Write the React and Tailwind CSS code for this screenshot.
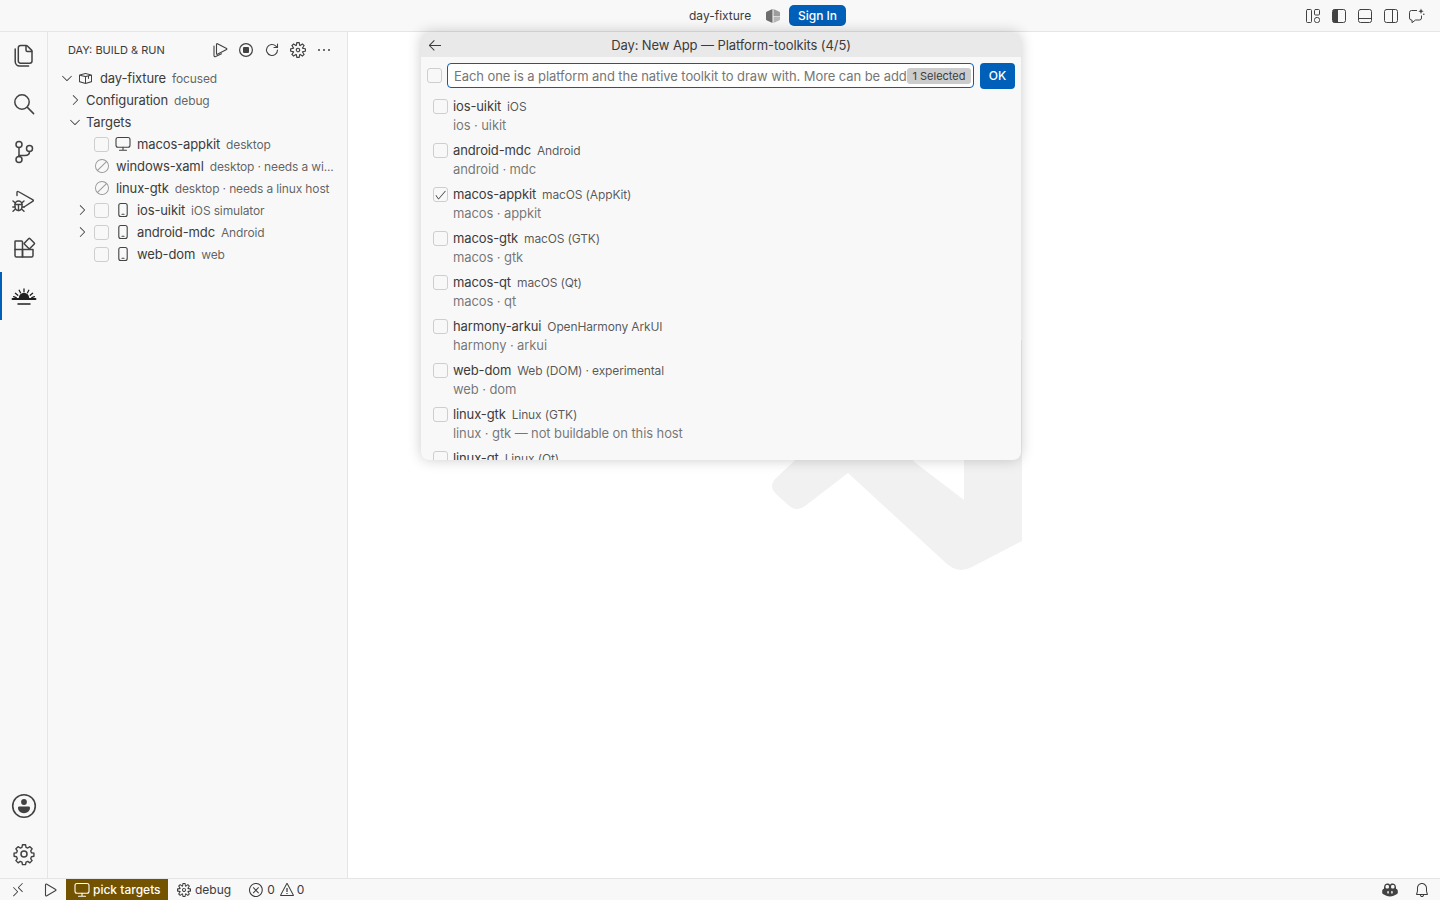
import React from "react";
import {
  VscCircleSlash, VscChevronRight, VscChevronDown, VscEllipsis,
  VscArrowLeft, VscCheck, VscSettingsGear, VscPackage, VscRemote, VscError, VscWarning, VscBell,
} from "react-icons/vsc";

const S = ({ size = 24, sw = 1.5, className = "", children, vb = "0 0 24 24" }) => (
  <svg width={size} height={size} viewBox={vb} fill="none" stroke="currentColor" strokeWidth={sw} strokeLinecap="round" strokeLinejoin="round" className={className}>
    {children}
  </svg>
);

const Files = () => (
  <S><path d="M8.500 1.500h5.800c.4 0 .8.2 1.100.5l4.100 4.100c.3.3.5.7.5 1.100V17a2.200 2.200 0 0 1-2.200 2.200H8.500A2.200 2.200 0 0 1 6.300 17V3.700a2.200 2.200 0 0 1 2.200-2.200z" /><path d="M14 1.800V6a1.500 1.500 0 0 0 1.500 1.500h4.200" /><path d="M3.200 5v12.600a4.400 4.400 0 0 0 4.400 4.400h9" /></S>
);
const Search = () => (
  <S><circle cx="10" cy="10" r="7.200" /><path d="M15.400 15.400 21.600 21.600" /></S>
);
const Source = () => (
  <S><circle cx="7" cy="4.500" r="3" /><circle cx="7" cy="19.500" r="3" /><circle cx="17.500" cy="8.500" r="3" /><path d="M7 7.500v9" /><path d="M7 15.500h6c2.500 0 4.500-1.500 4.500-4" /></S>
);
const DebugAlt = () => (
  <S sw={1.400}><path d="M5 7.500V4.200c0-.6.700-1 1.200-.7L21 11.800c.5.300.5 1 0 1.300L12 19" /><path d="M3 16.500a3.500 3.500 0 0 1 7 0v2.500a3.500 3.500 0 0 1-7 0z" /><path d="M3 16.500H10M6.500 16.500v6M1 13l2.300 2M12 13l-2.300 2M.8 19h2.200M12.200 19H10M1 23.200l2.500-2.200M12 23.200 9.500 21" /></S>
);
const Extensions = () => (
  <S><path d="M3.500 5h6c.6 0 1 .4 1 1v15H4.500a1.500 1.500 0 0 1-1.500-1.500V5.500c0-.3.200-.5.500-.5z" /><path d="M3 13.500h18M10.500 13.500V21h9a1.500 1.500 0 0 0 1.500-1.500V13.500" /><path d="M12.300 7.200 16.800 2.500c.3-.3.700-.3 1 0l4.500 4.500c.3.300.3.700 0 1l-4.500 4.500c-.3.300-.7.300-1 0l-4.500-4.500c-.3-.3-.3-.6 0-.8z" /></S>
);
const DayLogo = () => (
  <svg width="26" height="26" viewBox="0 0 26 26" fill="#1f1f1f" stroke="#1f1f1f" strokeLinecap="round">
    <path d="M7.800 14a5.200 5.200 0 0 1 10.400 0z" stroke="none" />
    <path strokeWidth="1.300" d="M13 5v2.800M8.200 6.300l1.300 2.500M17.800 6.300l-1.300 2.500M4.400 9.300l2.400 1.900M21.600 9.300l-2.400 1.900M2.600 12.700l2.600 1M23.400 12.700l-2.600 1" />
    <path strokeWidth="1.800" d="M1.500 15h23" />
    <path strokeWidth="1.500" d="M7 20h12" />
  </svg>
);
const Account = () => (
  <svg width="26" height="26" viewBox="0 0 26 26" fill="none">
    <circle cx="13" cy="13" r="11.300" stroke="#424242" strokeWidth="1.600" />
    <circle cx="13" cy="9" r="2.900" fill="#424242" />
    <path d="M7 14.800c0-.8.700-1.300 1.400-1.300h9.200c.7 0 1.400.5 1.400 1.300 0 3.200-2.700 5.400-6 5.400s-6-2.200-6-5.400z" fill="#424242" />
  </svg>
);
const Gear = ({ size = 24, sw = 1.5 }) => (
  <S size={size} sw={sw}><circle cx="12" cy="12" r="3" /><path d="M10.300 2.500h3.400l.5 2.700 1.900.8 2.300-1.500 2.400 2.400-1.500 2.300.8 1.900 2.700.5v3.400l-2.700.5-.8 1.900 1.500 2.300-2.400 2.400-2.300-1.500-1.900.8-.5 2.700h-3.400l-.5-2.700-1.900-.8-2.300 1.500-2.400-2.400 1.500-2.300-.8-1.900-2.700-.5v-3.400l2.700-.5.800-1.900-1.500-2.300 2.400-2.400 2.300 1.500 1.900-.8z" transform="translate(12 12) scale(.92) translate(-12 -12.500)" /></S>
);
const Play = ({ size = 16 }) => (
  <S size={size} sw={1.100} vb="0 0 16 16"><path d="M3.500 2.700v10.600c0 .5.500.8.900.6l9.300-5.300c.4-.2.400-.9 0-1.100L4.400 2.100c-.4-.2-.9.100-.9.600z" /></S>
);
const PlayDouble = () => (
  <S size={16} sw={1.100} vb="0 0 16 16"><path d="M4.500 2.200v9.600c0 .5.500.7.900.5l9.200-4.800c.4-.2.400-.8 0-1L5.400 1.700c-.4-.2-.9 0-.9.500z" /><path d="M2 4v9.500c0 1 .8 1.500 1.700 1.100L9.500 11.800" /></S>
);
const Stop = () => (
  <svg width="16" height="16" viewBox="0 0 16 16" fill="none"><circle cx="8" cy="8" r="6.400" stroke="#424242" strokeWidth="1.200" /><rect x="5" y="5" width="6" height="6" rx="1" fill="#424242" /></svg>
);
const Refresh = () => (
  <S size={16} sw={1.100} vb="0 0 16 16"><path d="M13.500 8a5.500 5.500 0 1 1-1.600-3.900L13.500 5.500" /><path d="M13.500 2v3.500H10" /></S>
);
const Phone = () => (
  <S size={16} sw={1.100} vb="0 0 16 16"><rect x="3.800" y="1.500" width="8.400" height="13" rx="2" /><path d="M7 12.300h2" /></S>
);
const Monitor = () => (
  <S size={16} sw={1.100} vb="0 0 16 16"><rect x="1" y="1.500" width="14" height="9.800" rx="2" /><path d="M8 11.300v2.700M4.500 14.200h7" /></S>
);
const LayoutCustom = () => (
  <S size={16} sw={1} vb="0 0 16 16"><rect x="1.500" y="1.500" width="5" height="13" rx="1" /><rect x="9.500" y="1.500" width="5" height="5.500" rx="1" /><rect x="9.500" y="9.500" width="5" height="5" rx="2" /></S>
);
const SideLeft = () => (
  <svg width="16" height="16" viewBox="0 0 16 16" fill="none"><rect x="1.500" y="1.500" width="13" height="13" rx="2" stroke="#424242" /><path d="M2 2.500c0-.5.500-1 1-1h4v13H3c-.5 0-1-.5-1-1z" fill="#424242" /></svg>
);
const PanelB = () => (
  <S size={16} sw={1} vb="0 0 16 16"><rect x="1.500" y="1.500" width="13" height="13" rx="2" /><path d="M1.500 10.500h13" /></S>
);
const SideRight = () => (
  <S size={16} sw={1} vb="0 0 16 16"><rect x="1.500" y="1.500" width="13" height="13" rx="2" /><path d="M9.500 1.500v13" /></S>
);
const Chat = () => (
  <svg width="18" height="16" viewBox="0 0 18 16" fill="none" stroke="#424242"><path d="M9 2.500H3.500a2 2 0 0 0-2 2v5.500a2 2 0 0 0 2 2H4v2.700L7.500 12h4a2 2 0 0 0 2-2V7.500" strokeLinejoin="round" /><path d="M13 .5l.8 1.900 1.900.8-1.900.8-.8 1.900-.8-1.900-1.900-.8 1.900-.8z" fill="#424242" stroke="none" /><circle cx="15.800" cy="6.300" r=".8" fill="#424242" stroke="none" /></svg>
);
const Copilot = () => (
  <svg width="18" height="16" viewBox="0 0 18 16" fill="none"><path d="M3 5.500C3 3 4.500 1.500 6.500 1.500c1.200 0 2 .4 2.500 1.200.5-.8 1.300-1.200 2.500-1.200C13.500 1.500 15 3 15 5.500v1.200c1 .4 1.800 1.200 1.800 2v2c0 .7-.6 1.300-1.200 1.600-1.800 1.200-4 2.200-6.600 2.200s-4.800-1-6.600-2.200c-.6-.3-1.200-.9-1.200-1.600v-2c0-.8.800-1.600 1.800-2z" fill="#424242" /><rect x="4.600" y="3" width="3.300" height="3.400" rx="1.200" fill="#f8f8f8" /><rect x="10.100" y="3" width="3.300" height="3.400" rx="1.200" fill="#f8f8f8" /><rect x="6.300" y="9" width="1.500" height="2.600" rx=".7" fill="#f8f8f8" /><rect x="10.200" y="9" width="1.500" height="2.600" rx=".7" fill="#f8f8f8" /></svg>
);
const DayMark = () => (
  <svg width="16" height="16" viewBox="0 0 16 16"><path d="M7.500 1 2 3.500C1.300 3.800 1 4.300 1 5v6c0 .7.300 1.200 1 1.500L7.500 15z" fill="#6e6e6e" /><path d="M8.500 1 14 3.500c.7.300 1 .8 1 1.500v3H8.500z" fill="#9d9d9d" /><path d="M8.500 8.500H15V11c0 .7-.3 1.200-1 1.500L8.500 15z" fill="#b8b8b8" /></svg>
);

const Box = ({ checked }) => (
  <span className="w-[15px] h-[15px] shrink-0 rounded-[3px] border border-[#cecece] bg-[#f8f8f8] flex items-center justify-center text-[#3b3b3b]">
    {checked && <VscCheck size={14} />}
  </span>
);

const Row = ({ pad, left, label, desc }) => (
  <div className={`h-[22px] flex items-center whitespace-nowrap ${pad}`}>
    {left}
    <span className="text-[#3b3b3b] text-[13px] tracking-[-0.12px] pt-[2px]">{label}</span>
    <span className="ml-[6px] text-[#3b3b3b]/80 text-[12px] tracking-[-0.14px] pt-[2px]">{desc}</span>
  </div>
);

const Chev = ({ down, cls = "" }) => (
  <span className={`w-[16px] h-[16px] shrink-0 flex items-center justify-center text-[#424242] ${cls}`}>
    {down ? <VscChevronDown size={16} /> : <VscChevronRight size={16} />}
  </span>
);

const quick = [
  ["ios-uikit", "iOS", "ios · uikit"],
  ["android-mdc", "Android", "android · mdc"],
  ["macos-appkit", "macOS (AppKit)", "macos · appkit", true],
  ["macos-gtk", "macOS (GTK)", "macos · gtk"],
  ["macos-qt", "macOS (Qt)", "macos · qt"],
  ["harmony-arkui", "OpenHarmony ArkUI", "harmony · arkui"],
  ["web-dom", "Web (DOM) · experimental", "web · dom"],
  ["linux-gtk", "Linux (GTK)", "linux · gtk — not buildable on this host"],
  ["linux-qt", "Linux (Qt)", "linux · qt — not buildable on this host"],
];

export default function App() {
  return (
    <div className="w-[1440px] h-[900px] overflow-hidden flex flex-col bg-white text-[#3b3b3b] relative font-['Inter','Noto_Sans',sans-serif] antialiased">
      <header className="h-[32px] shrink-0 bg-[#f8f8f8] border-b border-[#e5e5e5] flex items-center pl-[689px] pr-[10px] text-[#424242]">
        <span className="text-[12px] text-[#3b3b3b] w-[76px]">day-fixture</span>
        <DayMark />
        <span className="ml-[8px] w-[57px] h-[21px] rounded-[5px] bg-[#005fb8] text-white text-[12px] font-medium flex items-center justify-center">Sign In</span>
        <div className="ml-auto flex">
          {[<LayoutCustom key="a" />, <SideLeft key="b" />, <PanelB key="c" />, <SideRight key="d" />, <Chat key="e" />].map((icon, i) => (
            <span key={i} className="w-[26px] h-[22px] flex items-center justify-center">{icon}</span>
          ))}
        </div>
      </header>

      <div className="flex-1 flex min-h-0">
        <nav className="w-[48px] shrink-0 bg-[#f8f8f8] border-r border-[#e5e5e5] flex flex-col text-[#424242]">
          {[<Files key="a" />, <Search key="b" />, <Source key="c" />, <DebugAlt key="d" />, <Extensions key="e" />].map((icon, i) => (
            <span key={i} className="h-[48px] flex items-center justify-center">{icon}</span>
          ))}
          <span className="h-[48px] flex items-center justify-center border-l-2 border-[#005fb8] pr-[2px] pt-[2px]"><DayLogo /></span>
          <div className="mt-auto">
            <span className="h-[48px] flex items-center justify-center"><Account /></span>
            <span className="h-[48px] flex items-center justify-center"><Gear /></span>
          </div>
        </nav>

        <aside className="w-[300px] shrink-0 bg-[#f8f8f8] border-r border-[#e5e5e5]">
          <div className="h-[35px] flex items-center pl-[20px] pr-[15px] text-[#424242]">
            <span className="text-[11px] text-[#3b3b3b] flex-1 pt-[2px]">DAY: BUILD &amp; RUN</span>
            <div className="flex gap-[10px] items-center">
              <PlayDouble />
              <Stop />
              <Refresh />
              <VscSettingsGear size={16} />
              <VscEllipsis size={16} />
            </div>
          </div>
          <div>
            <Row pad="pl-[11px]" left={<><Chev down /><span className="w-[16px] ml-[2px] mr-[7px] flex text-[#424242]"><VscPackage size={16} /></span></>} label="day-fixture" desc="focused" />
            <Row pad="pl-[19px]" left={<span className="mr-[3px]"><Chev /></span>} label="Configuration" desc="debug" />
            <Row pad="pl-[19px]" left={<span className="mr-[3px]"><Chev down /></span>} label="Targets" />
            <Row pad="pl-[46px]" left={<><Box /><span className="ml-[6px] mr-[6px] text-[#424242]"><Monitor /></span></>} label="macos-appkit" desc="desktop" />
            <Row pad="pl-[46px]" left={<span className="mr-[6px] text-[#9a9a9a] flex"><VscCircleSlash size={16} /></span>} label="windows-xaml" desc="desktop · needs a wi..." />
            <Row pad="pl-[46px]" left={<span className="mr-[6px] text-[#9a9a9a] flex"><VscCircleSlash size={16} /></span>} label="linux-gtk" desc="desktop · needs a linux host" />
            <Row pad="pl-[26px]" left={<><Chev cls="mr-[4px]" /><Box /><span className="ml-[6px] mr-[6px] text-[#424242]"><Phone /></span></>} label="ios-uikit" desc="iOS simulator" />
            <Row pad="pl-[26px]" left={<><Chev cls="mr-[4px]" /><Box /><span className="ml-[6px] mr-[6px] text-[#424242]"><Phone /></span></>} label="android-mdc" desc="Android" />
            <Row pad="pl-[46px]" left={<><Box /><span className="ml-[6px] mr-[6px] text-[#424242]"><Phone /></span></>} label="web-dom" desc="web" />
          </div>
        </aside>

        <main className="flex-1 bg-white relative overflow-hidden">
          <svg className="absolute left-[392px] top-[268px]" width="300" height="300" viewBox="740 300 300 300">
            <path fill="#f1f1f1" fillRule="evenodd" d="M1022 340V541L972 567Q959 574 947 564L848 473L805 506Q796 513 787 504L776 494Q768 486 776 478L860 400L960 340ZM964 400L913 461L964 500Z" />
          </svg>
        </main>
      </div>

      <footer className="h-[22px] shrink-0 bg-[#f8f8f8] border-t border-[#e5e5e5] flex items-center text-[12px] text-[#3b3b3b]">
        <span className="w-[36px] flex justify-center text-[#424242]"><VscRemote size={16} /></span>
        <span className="w-[28px] flex justify-center text-[#424242]"><Play /></span>
        <span className="ml-[2px] w-[102px] h-[21px] bg-[#735200] text-white font-medium flex items-center pl-[8px] gap-[3px]"><Monitor />pick targets</span>
        <span className="ml-[8px] flex items-center gap-[4px] px-[1px]"><VscSettingsGear size={14} />debug</span>
        <span className="ml-[16px] flex items-center gap-[3px]"><VscError size={16} />0<span className="ml-[1px] flex"><VscWarning size={16} /></span><span className="ml-[-1px]">0</span></span>
        <span className="ml-auto mr-[8px] w-[32px] flex justify-center"><Copilot /></span>
        <span className="mr-[10px] w-[16px] flex justify-center"><VscBell size={16} /></span>
      </footer>

      <div className="absolute left-[421px] top-[32px] w-[600px] h-[428px] rounded-[8px] bg-[#f8f8f8] shadow-[0_0_14px_rgba(0,0,0,0.2)] overflow-hidden flex flex-col">
        <div className="h-[25px] shrink-0 bg-[#e9e9e9] flex items-center relative">
          <span className="absolute left-[6px] top-[5px] text-[#3b3b3b]"><VscArrowLeft size={16} /></span>
          <span className="w-full text-center text-[13px] tracking-[-0.1px] text-[#3b3b3b] pl-[20px] pt-[3px]">Day: New App — Platform-toolkits (4/5)</span>
        </div>
        <div className="h-[37px] shrink-0 flex items-center pl-[6px] pr-[6px]">
          <Box />
          <div className="ml-[5px] w-[527px] h-[25px] rounded-[4px] border border-[#005fb8] bg-white flex items-center pl-[6px] pr-[2px] overflow-hidden">
            <span className="flex-1 overflow-hidden whitespace-nowrap text-[13px] tracking-[-0.08px] text-[#767676] pt-[2px]">Each one is a platform and the native toolkit to draw with. More can be added later.</span>
            <span className="w-[64px] h-[16px] shrink-0 rounded-[3px] bg-[#cccccc] text-[11px] text-[#3b3b3b] flex items-center justify-center whitespace-nowrap pt-[1px]">1 Selected</span>
          </div>
          <span className="ml-[6px] w-[35px] h-[26px] rounded-[4px] bg-[#005fb8] text-white text-[12px] font-medium flex items-center justify-center">OK</span>
        </div>
        <div className="flex-1 min-h-0 overflow-hidden">
          {quick.map(([name, desc, sub, checked]) => (
            <div key={name} className="h-[44px] pl-[12px] flex whitespace-nowrap">
              <div className="pt-[5px]"><Box checked={checked} /></div>
              <div className="ml-[5px] pt-[3px]">
                <div className="h-[19px] flex items-center">
                  <span className="text-[13px] tracking-[-0.12px] text-[#3b3b3b]">{name}</span>
                  <span className="ml-[6px] text-[12px] tracking-[-0.14px] text-[#3b3b3b]/85">{desc}</span>
                </div>
                <div className="h-[19px] flex items-center text-[13px] tracking-[-0.1px] text-[#3b3b3b]/70">{sub}</div>
              </div>
            </div>
          ))}
        </div>
      </div>
    </div>
  );
}
